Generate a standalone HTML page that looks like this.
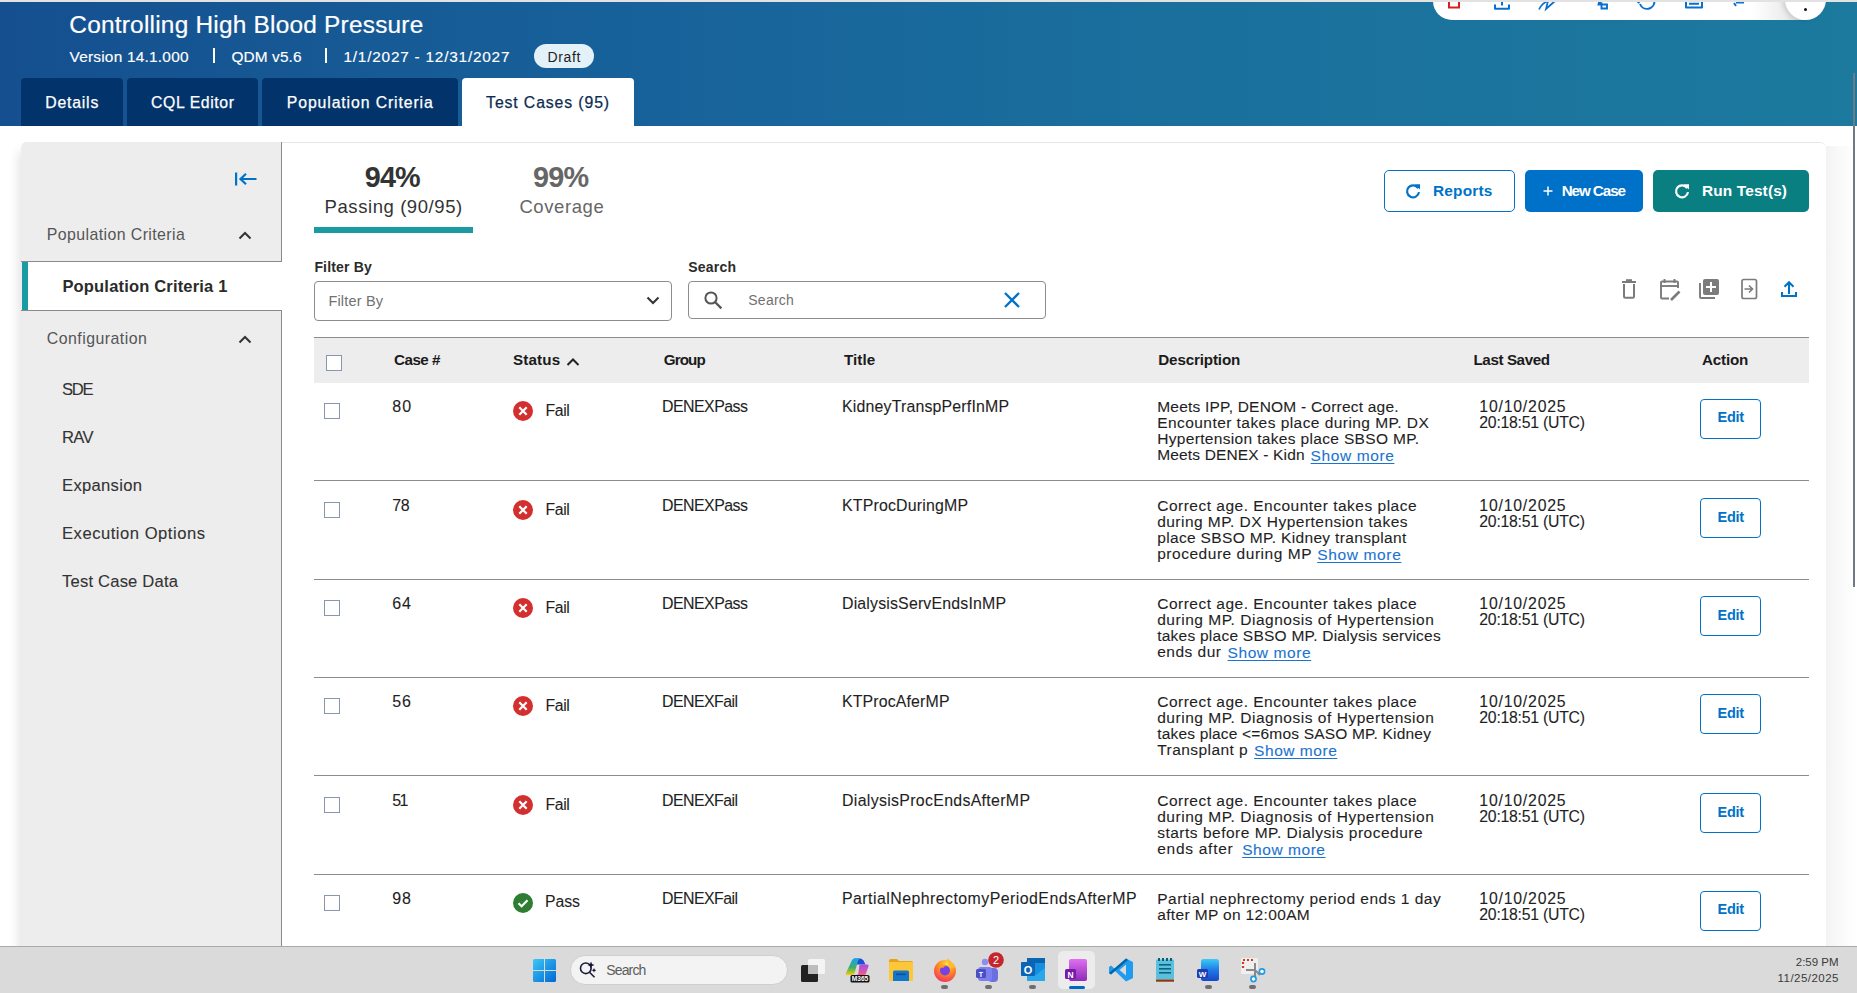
<!DOCTYPE html>
<html><head><meta charset="utf-8"><style>
html,body{margin:0;padding:0;}
body{width:1857px;height:993px;overflow:hidden;position:relative;background:#fff;font-family:"Liberation Sans", sans-serif;}
.t{position:absolute;white-space:nowrap;}
.r{position:absolute;box-sizing:border-box;}
.s{position:absolute;overflow:visible;}
</style></head><body>
<div class="r" style="left:0px;top:0px;width:1857px;height:2px;background:#e4e4e4;"></div>
<div class="r" style="left:0px;top:2px;width:1857px;height:124px;background:linear-gradient(90deg,#154f8f 0%,#17619a 33%,#1a6f9d 62%,#1c7a9e 100%);"></div>
<div class="t" id="t0" style="left:69.3px;top:9.91px;font-size:24.4px;line-height:29.28px;color:#fff;font-weight:400;-webkit-text-stroke:0.2px #fff;letter-spacing:0.231px;">Controlling High Blood Pressure</div>
<div class="t" id="t1" style="left:69.5px;top:47.72px;font-size:15.4px;line-height:18.48px;color:#fff;font-weight:400;-webkit-text-stroke:0.15px #fff;letter-spacing:0.231px;">Version 14.1.000</div>
<div class="r" style="left:213.2px;top:48px;width:1.7px;height:15px;background:#fff;"></div>
<div class="t" id="t2" style="left:231.5px;top:47.72px;font-size:15.4px;line-height:18.48px;color:#fff;font-weight:400;-webkit-text-stroke:0.15px #fff;letter-spacing:0.103px;">QDM v5.6</div>
<div class="r" style="left:325.2px;top:48px;width:1.7px;height:15px;background:#fff;"></div>
<div class="t" id="t3" style="left:343.5px;top:47.72px;font-size:15.4px;line-height:18.48px;color:#fff;font-weight:400;-webkit-text-stroke:0.15px #fff;letter-spacing:0.769px;">1/1/2027 - 12/31/2027</div>
<div class="r" style="left:534px;top:44px;width:60px;height:24px;background:#e3f1f8;border-radius:12px;"></div>
<div class="t" id="t4" style="left:547.4px;top:48.55px;font-size:14px;line-height:16.8px;color:#222;font-weight:400;letter-spacing:0.664px;">Draft</div>
<div class="r" style="left:21px;top:78px;width:102px;height:48px;background:#02346b;border-radius:4px 4px 0 0;"></div>
<div class="r" style="left:127px;top:78px;width:131px;height:48px;background:#02346b;border-radius:4px 4px 0 0;"></div>
<div class="r" style="left:262px;top:78px;width:196px;height:48px;background:#02346b;border-radius:4px 4px 0 0;"></div>
<div class="r" style="left:462px;top:78px;width:172px;height:48px;background:#fff;border-radius:4px 4px 0 0;"></div>
<div class="t" id="t5" style="left:45.3px;top:93.85px;font-size:15.8px;line-height:18.96px;color:#fff;font-weight:400;-webkit-text-stroke:0.25px #fff;letter-spacing:0.784px;">Details</div>
<div class="t" id="t6" style="left:151px;top:93.85px;font-size:15.8px;line-height:18.96px;color:#fff;font-weight:400;-webkit-text-stroke:0.25px #fff;letter-spacing:0.604px;">CQL Editor</div>
<div class="t" id="t7" style="left:286.8px;top:93.85px;font-size:15.8px;line-height:18.96px;color:#fff;font-weight:400;-webkit-text-stroke:0.25px #fff;letter-spacing:0.891px;">Population Criteria</div>
<div class="t" id="t8" style="left:486.1px;top:93.85px;font-size:15.8px;line-height:18.96px;color:#0d2b52;font-weight:400;-webkit-text-stroke:0.25px #0d2b52;letter-spacing:0.884px;">Test Cases (95)</div>
<div class="r" style="left:1853px;top:73px;width:2px;height:514px;background:#707a86;"></div>
<div class="r" style="left:21px;top:142px;width:1805px;height:820px;background:#fff;border-radius:6px 6px 0 0;box-shadow:-8px 4px 10px -6px rgba(0,0,0,0.12);border-top:1px solid #e6e6e6;"></div>
<div class="r" style="left:21px;top:142px;width:261px;height:820px;background:#ededed;border-radius:6px 0 0 0;border-right:1px solid #8a8a8a;"></div>
<svg class="s" style="left:233px;top:171px" width="26" height="16" viewBox="0 0 26 16"><rect x="2" y="1.5" width="2.2" height="13" fill="#0073c8"/><path d="M23.5 8 H7.5 M13 2.8 L7.5 8 L13 13.2" stroke="#0073c8" stroke-width="2.2" fill="none"/></svg>
<div class="t" id="t9" style="left:46.8px;top:225.35px;font-size:15.9px;line-height:19.08px;color:#555;font-weight:400;letter-spacing:0.404px;">Population Criteria</div>
<svg class="s" style="left:237px;top:229px" width="16" height="12" viewBox="0 0 16 12"><path d="M2.5 9.5 L8 4 L13.5 9.5" stroke="#333" stroke-width="2" fill="none"/></svg>
<div class="r" style="left:21px;top:261px;width:261px;height:1px;background:#8a8a8a;"></div>
<div class="r" style="left:22px;top:262px;width:260px;height:48px;background:#fff;"></div>
<div class="r" style="left:22px;top:262px;width:6px;height:48px;background:#1a9ba1;"></div>
<div class="r" style="left:21px;top:310px;width:261px;height:1px;background:#8a8a8a;"></div>
<div class="t" id="t10" style="left:62.4px;top:276.68px;font-size:16.5px;line-height:19.8px;color:#2b2b2b;font-weight:700;letter-spacing:0.182px;">Population Criteria 1</div>
<div class="t" id="t11" style="left:46.8px;top:328.95px;font-size:15.9px;line-height:19.08px;color:#555;font-weight:400;letter-spacing:0.456px;">Configuration</div>
<svg class="s" style="left:237px;top:333px" width="16" height="12" viewBox="0 0 16 12"><path d="M2.5 9.5 L8 4 L13.5 9.5" stroke="#333" stroke-width="2" fill="none"/></svg>
<div class="t" id="t12" style="left:62px;top:379.59px;font-size:16.6px;line-height:19.92px;color:#333;font-weight:400;-webkit-text-stroke:0.1px #333;letter-spacing:-1.312px;">SDE</div>
<div class="t" id="t13" style="left:62px;top:427.59px;font-size:16.6px;line-height:19.92px;color:#333;font-weight:400;-webkit-text-stroke:0.1px #333;letter-spacing:-0.695px;">RAV</div>
<div class="t" id="t14" style="left:62px;top:475.59px;font-size:16.6px;line-height:19.92px;color:#333;font-weight:400;-webkit-text-stroke:0.1px #333;letter-spacing:0.312px;">Expansion</div>
<div class="t" id="t15" style="left:62px;top:523.59px;font-size:16.6px;line-height:19.92px;color:#333;font-weight:400;-webkit-text-stroke:0.1px #333;letter-spacing:0.521px;">Execution Options</div>
<div class="t" id="t16" style="left:62px;top:571.59px;font-size:16.6px;line-height:19.92px;color:#333;font-weight:400;-webkit-text-stroke:0.1px #333;letter-spacing:0.196px;">Test Case Data</div>
<div class="t" id="t17" style="left:364.7px;top:159.74px;font-size:28.8px;line-height:34.56px;color:#333;font-weight:700;letter-spacing:-0.820px;">94%</div>
<div class="t" id="t18" style="left:324.6px;top:196.29px;font-size:18.5px;line-height:22.2px;color:#333;font-weight:400;letter-spacing:0.573px;">Passing (90/95)</div>
<div class="r" style="left:314px;top:227px;width:159px;height:6px;background:#1a9ba1;"></div>
<div class="t" id="t19" style="left:533px;top:159.74px;font-size:28.8px;line-height:34.56px;color:#666;font-weight:700;letter-spacing:-0.820px;">99%</div>
<div class="t" id="t20" style="left:519.4px;top:196.29px;font-size:18.5px;line-height:22.2px;color:#666;font-weight:400;letter-spacing:0.597px;">Coverage</div>
<div class="r" style="left:1384px;top:170px;width:131px;height:42px;border:1.5px solid #0073c8;border-radius:5px;background:#fff;"></div>
<svg class="s" style="left:1405px;top:183px" width="16" height="16" viewBox="0 0 16 16"><path d="M13.2 5.2 A6 6 0 1 0 14 9.2" stroke="#0073c8" stroke-width="2.2" fill="none"/><path d="M9.6 1.2 L15 1.2 L15 6.6 Z" fill="#0073c8"/></svg>
<div class="t" id="t21" style="left:1433px;top:182.02px;font-size:15.4px;line-height:18.48px;color:#0073c8;font-weight:700;letter-spacing:0.191px;">Reports</div>
<div class="r" style="left:1525px;top:170px;width:118px;height:42px;background:#0071c9;border-radius:5px;"></div>
<svg class="s" style="left:1543px;top:186px" width="10" height="10" viewBox="0 0 10 10"><path d="M5 0.5 V9.5 M0.5 5 H9.5" stroke="#fff" stroke-width="1.5"/></svg>
<div class="t" id="t22" style="left:1561.7px;top:181.81px;font-size:15.2px;line-height:18.24px;color:#fff;font-weight:700;letter-spacing:-1.067px;">New Case</div>
<div class="r" style="left:1653px;top:170px;width:156px;height:42px;background:#0a7f82;border-radius:5px;"></div>
<svg class="s" style="left:1674px;top:183px" width="16" height="16" viewBox="0 0 16 16"><path d="M13.2 5.2 A6 6 0 1 0 14 9.2" stroke="#fff" stroke-width="2.2" fill="none"/><path d="M9.6 1.2 L15 1.2 L15 6.6 Z" fill="#fff"/></svg>
<div class="t" id="t23" style="left:1702px;top:182.02px;font-size:15.4px;line-height:18.48px;color:#fff;font-weight:700;letter-spacing:0.148px;">Run Test(s)</div>
<div class="t" id="t24" style="left:314.4px;top:258.75px;font-size:14px;line-height:16.8px;color:#2b2b2b;font-weight:700;letter-spacing:0.173px;">Filter By</div>
<div class="r" style="left:314px;top:281px;width:358px;height:40px;border:1px solid #8c8c8c;border-radius:4px;background:#fff;"></div>
<div class="t" id="t25" style="left:328.4px;top:292.68px;font-size:14.5px;line-height:17.4px;color:#717171;font-weight:400;letter-spacing:0.179px;">Filter By</div>
<svg class="s" style="left:645px;top:294px" width="16" height="14" viewBox="0 0 16 14"><path d="M2.5 3.5 L8 9 L13.5 3.5" stroke="#333" stroke-width="2" fill="none"/></svg>
<div class="t" id="t26" style="left:688.2px;top:259.05px;font-size:14px;line-height:16.8px;color:#2b2b2b;font-weight:700;letter-spacing:0.219px;">Search</div>
<div class="r" style="left:688px;top:281px;width:358px;height:38px;border:1px solid #8c8c8c;border-radius:4px;background:#fff;"></div>
<svg class="s" style="left:703px;top:290px" width="20" height="20" viewBox="0 0 20 20"><circle cx="8" cy="8" r="5.6" stroke="#555" stroke-width="2" fill="none"/><path d="M12.2 12.2 L18.4 18.4" stroke="#555" stroke-width="2.3"/></svg>
<div class="t" id="t27" style="left:748.3px;top:291.75px;font-size:14px;line-height:16.8px;color:#717171;font-weight:400;letter-spacing:0.228px;">Search</div>
<svg class="s" style="left:1003px;top:291px" width="18" height="18" viewBox="0 0 18 18"><path d="M2 2 L16 16 M16 2 L2 16" stroke="#0073c8" stroke-width="2.3"/></svg>
<svg class="s" style="left:1620px;top:278px" width="18" height="22" viewBox="0 0 18 22"><path d="M2 4 H16" stroke="#7b7b7b" stroke-width="2"/><path d="M6 2.2 H12" stroke="#7b7b7b" stroke-width="2"/><path d="M4 6 V18.5 Q4 19.8 5.3 19.8 H12.7 Q14 19.8 14 18.5 V6" stroke="#7b7b7b" stroke-width="2" fill="none"/></svg>
<svg class="s" style="left:1658px;top:277px" width="24" height="24" viewBox="0 0 24 24"><path d="M11 21.5 H4 Q3 21.5 3 20.5 V5.5 Q3 4.5 4 4.5 H19 Q20 4.5 20 5.5 V11" stroke="#7b7b7b" stroke-width="1.9" fill="none"/><path d="M3 9 H20" stroke="#7b7b7b" stroke-width="1.9"/><path d="M6.5 2 V6 M16.5 2 V6" stroke="#7b7b7b" stroke-width="1.9"/><path d="M13 23 L21.5 14.5" stroke="#7b7b7b" stroke-width="2.6"/></svg>
<svg class="s" style="left:1697px;top:277px" width="24" height="24" viewBox="0 0 24 24"><rect x="6" y="2" width="16" height="16" rx="2" fill="#7b7b7b"/><path d="M14 5 V15 M9 10 H19" stroke="#fff" stroke-width="2"/><path d="M3 6 V20 Q3 21 4 21 H18" stroke="#7b7b7b" stroke-width="1.9" fill="none"/></svg>
<svg class="s" style="left:1739px;top:277px" width="20" height="24" viewBox="0 0 20 24"><rect x="3" y="2.5" width="14.5" height="19" rx="1.8" stroke="#7b7b7b" stroke-width="1.7" fill="none"/><path d="M5.5 12 H13.5 M10 8.5 L13.5 12 L10 15.5" stroke="#7b7b7b" stroke-width="1.6" fill="none"/></svg>
<svg class="s" style="left:1779px;top:279px" width="20" height="20" viewBox="0 0 20 20"><path d="M10 15 V4 M5.5 7.8 L10 3.3 L14.5 7.8" stroke="#0073c8" stroke-width="2.1" fill="none"/><path d="M3 13 V17 H17 V13" stroke="#0073c8" stroke-width="2.1" fill="none"/></svg>
<div class="r" style="left:314px;top:337px;width:1495px;height:1px;background:#8c8c8c;"></div>
<div class="r" style="left:314px;top:338px;width:1495px;height:45px;background:#ededed;"></div>
<div class="r" style="left:326px;top:355px;width:16px;height:16px;border:1.5px solid #8896b0;background:#fff;"></div>
<div class="t" id="t28" style="left:394px;top:350.81px;font-size:15.2px;line-height:18.24px;color:#1b1b1b;font-weight:700;letter-spacing:-0.497px;">Case #</div>
<div class="t" id="t29" style="left:512.9px;top:350.81px;font-size:15.2px;line-height:18.24px;color:#1b1b1b;font-weight:700;letter-spacing:0.196px;">Status</div>
<div class="t" id="t30" style="left:663.8px;top:350.81px;font-size:15.2px;line-height:18.24px;color:#1b1b1b;font-weight:700;letter-spacing:-0.891px;">Group</div>
<div class="t" id="t31" style="left:843.9px;top:350.81px;font-size:15.2px;line-height:18.24px;color:#1b1b1b;font-weight:700;letter-spacing:0.087px;">Title</div>
<div class="t" id="t32" style="left:1158.3px;top:350.81px;font-size:15.2px;line-height:18.24px;color:#1b1b1b;font-weight:700;letter-spacing:-0.155px;">Description</div>
<div class="t" id="t33" style="left:1473.5px;top:350.81px;font-size:15.2px;line-height:18.24px;color:#1b1b1b;font-weight:700;letter-spacing:-0.411px;">Last Saved</div>
<div class="t" id="t34" style="left:1702px;top:350.81px;font-size:15.2px;line-height:18.24px;color:#1b1b1b;font-weight:700;letter-spacing:-0.190px;">Action</div>
<svg class="s" style="left:565px;top:356px" width="16" height="12" viewBox="0 0 16 12"><path d="M2.5 9 L8 3.5 L13.5 9" stroke="#222" stroke-width="2" fill="none"/></svg>
<div class="r" style="left:314px;top:480px;width:1495px;height:1px;background:#8c8c8c;"></div>
<div class="r" style="left:314px;top:579px;width:1495px;height:1px;background:#8c8c8c;"></div>
<div class="r" style="left:314px;top:677px;width:1495px;height:1px;background:#8c8c8c;"></div>
<div class="r" style="left:314px;top:775px;width:1495px;height:1px;background:#8c8c8c;"></div>
<div class="r" style="left:314px;top:874px;width:1495px;height:1px;background:#8c8c8c;"></div>
<div class="r" style="left:324px;top:403px;width:16px;height:16px;border:1.5px solid #8896b0;background:#fff;"></div>
<div class="t" id="t35" style="left:392.2px;top:396.96px;font-size:16px;line-height:19.2px;color:#1f1f1f;font-weight:400;-webkit-text-stroke:0.1px #1f1f1f;letter-spacing:1.203px;">80</div>
<svg class="s" style="left:513px;top:401px" width="20" height="20" viewBox="0 0 20 20"><circle cx="10" cy="10" r="10" fill="#d32f2f"/><path d="M6.3 6.3 L13.7 13.7 M13.7 6.3 L6.3 13.7" stroke="#fff" stroke-width="2.2"/></svg>
<div class="t" id="t36" style="left:545.6px;top:401.65px;font-size:15.8px;line-height:18.96px;color:#1f1f1f;font-weight:400;-webkit-text-stroke:0.1px #1f1f1f;letter-spacing:-0.423px;">Fail</div>
<div class="t" id="t37" style="left:662px;top:397.05px;font-size:15.9px;line-height:19.08px;color:#1f1f1f;font-weight:400;-webkit-text-stroke:0.1px #1f1f1f;letter-spacing:-0.510px;">DENEXPass</div>
<div class="t" id="t38" style="left:842px;top:397.05px;font-size:15.9px;line-height:19.08px;color:#1f1f1f;font-weight:400;-webkit-text-stroke:0.1px #1f1f1f;letter-spacing:0.174px;">KidneyTranspPerfInMP</div>
<div class="t" id="t39" style="left:1157.2px;top:397.83px;font-size:15.5px;line-height:18.6px;color:#1f1f1f;font-weight:400;-webkit-text-stroke:0.1px #1f1f1f;letter-spacing:0.217px;">Meets IPP, DENOM - Correct age.</div>
<div class="t" id="t40" style="left:1157.2px;top:413.83px;font-size:15.5px;line-height:18.6px;color:#1f1f1f;font-weight:400;-webkit-text-stroke:0.1px #1f1f1f;letter-spacing:0.445px;">Encounter takes place during MP. DX</div>
<div class="t" id="t41" style="left:1157.2px;top:429.83px;font-size:15.5px;line-height:18.6px;color:#1f1f1f;font-weight:400;-webkit-text-stroke:0.1px #1f1f1f;letter-spacing:0.334px;">Hypertension takes place SBSO MP.</div>
<div class="t" id="t42" style="left:1157.2px;top:445.83px;font-size:15.5px;line-height:18.6px;color:#1f1f1f;font-weight:400;-webkit-text-stroke:0.1px #1f1f1f;letter-spacing:0.158px;">Meets DENEX - Kidn</div>
<div class="t" id="t43" style="left:1310.6px;top:447.03px;font-size:15.5px;line-height:18.6px;color:#1a73d0;font-weight:400;-webkit-text-stroke:0.1px #1a73d0;letter-spacing:0.599px;text-decoration:underline;text-underline-offset:1.5px;">Show more</div>
<div class="t" id="t44" style="left:1479.3px;top:398.15px;font-size:15.8px;line-height:18.96px;color:#1f1f1f;font-weight:400;-webkit-text-stroke:0.1px #1f1f1f;letter-spacing:0.804px;">10/10/2025</div>
<div class="t" id="t45" style="left:1479.3px;top:414.15px;font-size:15.8px;line-height:18.96px;color:#1f1f1f;font-weight:400;-webkit-text-stroke:0.1px #1f1f1f;letter-spacing:-0.244px;">20:18:51 (UTC)</div>
<div class="r" style="left:1700px;top:399px;width:61px;height:40px;border:1.2px solid #0073c8;border-radius:4px;background:#fff;"></div>
<div class="t" id="t46" style="left:1717.6px;top:409.38px;font-size:14.5px;line-height:17.4px;color:#0073c8;font-weight:700;letter-spacing:-0.330px;">Edit</div>
<div class="r" style="left:324px;top:502px;width:16px;height:16px;border:1.5px solid #8896b0;background:#fff;"></div>
<div class="t" id="t47" style="left:392.2px;top:496.16px;font-size:16px;line-height:19.2px;color:#1f1f1f;font-weight:400;-webkit-text-stroke:0.1px #1f1f1f;letter-spacing:-0.397px;">78</div>
<svg class="s" style="left:513px;top:500px" width="20" height="20" viewBox="0 0 20 20"><circle cx="10" cy="10" r="10" fill="#d32f2f"/><path d="M6.3 6.3 L13.7 13.7 M13.7 6.3 L6.3 13.7" stroke="#fff" stroke-width="2.2"/></svg>
<div class="t" id="t48" style="left:545.6px;top:500.85px;font-size:15.8px;line-height:18.96px;color:#1f1f1f;font-weight:400;-webkit-text-stroke:0.1px #1f1f1f;letter-spacing:-0.423px;">Fail</div>
<div class="t" id="t49" style="left:662px;top:496.25px;font-size:15.9px;line-height:19.08px;color:#1f1f1f;font-weight:400;-webkit-text-stroke:0.1px #1f1f1f;letter-spacing:-0.510px;">DENEXPass</div>
<div class="t" id="t50" style="left:842px;top:496.25px;font-size:15.9px;line-height:19.08px;color:#1f1f1f;font-weight:400;-webkit-text-stroke:0.1px #1f1f1f;letter-spacing:0.181px;">KTProcDuringMP</div>
<div class="t" id="t51" style="left:1157.2px;top:497.03px;font-size:15.5px;line-height:18.6px;color:#1f1f1f;font-weight:400;-webkit-text-stroke:0.1px #1f1f1f;letter-spacing:0.498px;">Correct age. Encounter takes place</div>
<div class="t" id="t52" style="left:1157.2px;top:513.03px;font-size:15.5px;line-height:18.6px;color:#1f1f1f;font-weight:400;-webkit-text-stroke:0.1px #1f1f1f;letter-spacing:0.468px;">during MP. DX Hypertension takes</div>
<div class="t" id="t53" style="left:1157.2px;top:529.03px;font-size:15.5px;line-height:18.6px;color:#1f1f1f;font-weight:400;-webkit-text-stroke:0.1px #1f1f1f;letter-spacing:0.346px;">place SBSO MP. Kidney transplant</div>
<div class="t" id="t54" style="left:1157.2px;top:545.03px;font-size:15.5px;line-height:18.6px;color:#1f1f1f;font-weight:400;-webkit-text-stroke:0.1px #1f1f1f;letter-spacing:0.531px;">procedure during MP</div>
<div class="t" id="t55" style="left:1317.2px;top:546.23px;font-size:15.5px;line-height:18.6px;color:#1a73d0;font-weight:400;-webkit-text-stroke:0.1px #1a73d0;letter-spacing:0.649px;text-decoration:underline;text-underline-offset:1.5px;">Show more</div>
<div class="t" id="t56" style="left:1479.3px;top:497.35px;font-size:15.8px;line-height:18.96px;color:#1f1f1f;font-weight:400;-webkit-text-stroke:0.1px #1f1f1f;letter-spacing:0.804px;">10/10/2025</div>
<div class="t" id="t57" style="left:1479.3px;top:513.35px;font-size:15.8px;line-height:18.96px;color:#1f1f1f;font-weight:400;-webkit-text-stroke:0.1px #1f1f1f;letter-spacing:-0.244px;">20:18:51 (UTC)</div>
<div class="r" style="left:1700px;top:498px;width:61px;height:40px;border:1.2px solid #0073c8;border-radius:4px;background:#fff;"></div>
<div class="t" id="t58" style="left:1717.6px;top:508.58px;font-size:14.5px;line-height:17.4px;color:#0073c8;font-weight:700;letter-spacing:-0.330px;">Edit</div>
<div class="r" style="left:324px;top:600px;width:16px;height:16px;border:1.5px solid #8896b0;background:#fff;"></div>
<div class="t" id="t59" style="left:392.2px;top:594.16px;font-size:16px;line-height:19.2px;color:#1f1f1f;font-weight:400;-webkit-text-stroke:0.1px #1f1f1f;letter-spacing:0.903px;">64</div>
<svg class="s" style="left:513px;top:598px" width="20" height="20" viewBox="0 0 20 20"><circle cx="10" cy="10" r="10" fill="#d32f2f"/><path d="M6.3 6.3 L13.7 13.7 M13.7 6.3 L6.3 13.7" stroke="#fff" stroke-width="2.2"/></svg>
<div class="t" id="t60" style="left:545.6px;top:598.85px;font-size:15.8px;line-height:18.96px;color:#1f1f1f;font-weight:400;-webkit-text-stroke:0.1px #1f1f1f;letter-spacing:-0.423px;">Fail</div>
<div class="t" id="t61" style="left:662px;top:594.25px;font-size:15.9px;line-height:19.08px;color:#1f1f1f;font-weight:400;-webkit-text-stroke:0.1px #1f1f1f;letter-spacing:-0.510px;">DENEXPass</div>
<div class="t" id="t62" style="left:842px;top:594.25px;font-size:15.9px;line-height:19.08px;color:#1f1f1f;font-weight:400;-webkit-text-stroke:0.1px #1f1f1f;letter-spacing:0.172px;">DialysisServEndsInMP</div>
<div class="t" id="t63" style="left:1157.2px;top:595.03px;font-size:15.5px;line-height:18.6px;color:#1f1f1f;font-weight:400;-webkit-text-stroke:0.1px #1f1f1f;letter-spacing:0.498px;">Correct age. Encounter takes place</div>
<div class="t" id="t64" style="left:1157.2px;top:611.03px;font-size:15.5px;line-height:18.6px;color:#1f1f1f;font-weight:400;-webkit-text-stroke:0.1px #1f1f1f;letter-spacing:0.526px;">during MP. Diagnosis of Hypertension</div>
<div class="t" id="t65" style="left:1157.2px;top:627.03px;font-size:15.5px;line-height:18.6px;color:#1f1f1f;font-weight:400;-webkit-text-stroke:0.1px #1f1f1f;letter-spacing:0.243px;">takes place SBSO MP. Dialysis services</div>
<div class="t" id="t66" style="left:1157.2px;top:643.03px;font-size:15.5px;line-height:18.6px;color:#1f1f1f;font-weight:400;-webkit-text-stroke:0.1px #1f1f1f;letter-spacing:0.496px;">ends dur</div>
<div class="t" id="t67" style="left:1227.5px;top:644.23px;font-size:15.5px;line-height:18.6px;color:#1a73d0;font-weight:400;-webkit-text-stroke:0.1px #1a73d0;letter-spacing:0.587px;text-decoration:underline;text-underline-offset:1.5px;">Show more</div>
<div class="t" id="t68" style="left:1479.3px;top:595.35px;font-size:15.8px;line-height:18.96px;color:#1f1f1f;font-weight:400;-webkit-text-stroke:0.1px #1f1f1f;letter-spacing:0.804px;">10/10/2025</div>
<div class="t" id="t69" style="left:1479.3px;top:611.35px;font-size:15.8px;line-height:18.96px;color:#1f1f1f;font-weight:400;-webkit-text-stroke:0.1px #1f1f1f;letter-spacing:-0.244px;">20:18:51 (UTC)</div>
<div class="r" style="left:1700px;top:596px;width:61px;height:40px;border:1.2px solid #0073c8;border-radius:4px;background:#fff;"></div>
<div class="t" id="t70" style="left:1717.6px;top:606.58px;font-size:14.5px;line-height:17.4px;color:#0073c8;font-weight:700;letter-spacing:-0.330px;">Edit</div>
<div class="r" style="left:324px;top:698px;width:16px;height:16px;border:1.5px solid #8896b0;background:#fff;"></div>
<div class="t" id="t71" style="left:392.2px;top:692.16px;font-size:16px;line-height:19.2px;color:#1f1f1f;font-weight:400;-webkit-text-stroke:0.1px #1f1f1f;letter-spacing:0.903px;">56</div>
<svg class="s" style="left:513px;top:696px" width="20" height="20" viewBox="0 0 20 20"><circle cx="10" cy="10" r="10" fill="#d32f2f"/><path d="M6.3 6.3 L13.7 13.7 M13.7 6.3 L6.3 13.7" stroke="#fff" stroke-width="2.2"/></svg>
<div class="t" id="t72" style="left:545.6px;top:696.85px;font-size:15.8px;line-height:18.96px;color:#1f1f1f;font-weight:400;-webkit-text-stroke:0.1px #1f1f1f;letter-spacing:-0.423px;">Fail</div>
<div class="t" id="t73" style="left:662px;top:692.25px;font-size:15.9px;line-height:19.08px;color:#1f1f1f;font-weight:400;-webkit-text-stroke:0.1px #1f1f1f;letter-spacing:-0.545px;">DENEXFail</div>
<div class="t" id="t74" style="left:842px;top:692.25px;font-size:15.9px;line-height:19.08px;color:#1f1f1f;font-weight:400;-webkit-text-stroke:0.1px #1f1f1f;letter-spacing:0.139px;">KTProcAferMP</div>
<div class="t" id="t75" style="left:1157.2px;top:693.03px;font-size:15.5px;line-height:18.6px;color:#1f1f1f;font-weight:400;-webkit-text-stroke:0.1px #1f1f1f;letter-spacing:0.498px;">Correct age. Encounter takes place</div>
<div class="t" id="t76" style="left:1157.2px;top:709.03px;font-size:15.5px;line-height:18.6px;color:#1f1f1f;font-weight:400;-webkit-text-stroke:0.1px #1f1f1f;letter-spacing:0.526px;">during MP. Diagnosis of Hypertension</div>
<div class="t" id="t77" style="left:1157.2px;top:725.03px;font-size:15.5px;line-height:18.6px;color:#1f1f1f;font-weight:400;-webkit-text-stroke:0.1px #1f1f1f;letter-spacing:0.183px;">takes place &lt;=6mos SASO MP. Kidney</div>
<div class="t" id="t78" style="left:1157.2px;top:741.03px;font-size:15.5px;line-height:18.6px;color:#1f1f1f;font-weight:400;-webkit-text-stroke:0.1px #1f1f1f;letter-spacing:0.446px;">Transplant p</div>
<div class="t" id="t79" style="left:1254.1px;top:742.23px;font-size:15.5px;line-height:18.6px;color:#1a73d0;font-weight:400;-webkit-text-stroke:0.1px #1a73d0;letter-spacing:0.537px;text-decoration:underline;text-underline-offset:1.5px;">Show more</div>
<div class="t" id="t80" style="left:1479.3px;top:693.35px;font-size:15.8px;line-height:18.96px;color:#1f1f1f;font-weight:400;-webkit-text-stroke:0.1px #1f1f1f;letter-spacing:0.804px;">10/10/2025</div>
<div class="t" id="t81" style="left:1479.3px;top:709.35px;font-size:15.8px;line-height:18.96px;color:#1f1f1f;font-weight:400;-webkit-text-stroke:0.1px #1f1f1f;letter-spacing:-0.244px;">20:18:51 (UTC)</div>
<div class="r" style="left:1700px;top:694px;width:61px;height:40px;border:1.2px solid #0073c8;border-radius:4px;background:#fff;"></div>
<div class="t" id="t82" style="left:1717.6px;top:704.58px;font-size:14.5px;line-height:17.4px;color:#0073c8;font-weight:700;letter-spacing:-0.330px;">Edit</div>
<div class="r" style="left:324px;top:797px;width:16px;height:16px;border:1.5px solid #8896b0;background:#fff;"></div>
<div class="t" id="t83" style="left:392.2px;top:791.16px;font-size:16px;line-height:19.2px;color:#1f1f1f;font-weight:400;-webkit-text-stroke:0.1px #1f1f1f;letter-spacing:-1.597px;">51</div>
<svg class="s" style="left:513px;top:795px" width="20" height="20" viewBox="0 0 20 20"><circle cx="10" cy="10" r="10" fill="#d32f2f"/><path d="M6.3 6.3 L13.7 13.7 M13.7 6.3 L6.3 13.7" stroke="#fff" stroke-width="2.2"/></svg>
<div class="t" id="t84" style="left:545.6px;top:795.85px;font-size:15.8px;line-height:18.96px;color:#1f1f1f;font-weight:400;-webkit-text-stroke:0.1px #1f1f1f;letter-spacing:-0.423px;">Fail</div>
<div class="t" id="t85" style="left:662px;top:791.25px;font-size:15.9px;line-height:19.08px;color:#1f1f1f;font-weight:400;-webkit-text-stroke:0.1px #1f1f1f;letter-spacing:-0.545px;">DENEXFail</div>
<div class="t" id="t86" style="left:842px;top:791.25px;font-size:15.9px;line-height:19.08px;color:#1f1f1f;font-weight:400;-webkit-text-stroke:0.1px #1f1f1f;letter-spacing:0.317px;">DialysisProcEndsAfterMP</div>
<div class="t" id="t87" style="left:1157.2px;top:792.03px;font-size:15.5px;line-height:18.6px;color:#1f1f1f;font-weight:400;-webkit-text-stroke:0.1px #1f1f1f;letter-spacing:0.498px;">Correct age. Encounter takes place</div>
<div class="t" id="t88" style="left:1157.2px;top:808.03px;font-size:15.5px;line-height:18.6px;color:#1f1f1f;font-weight:400;-webkit-text-stroke:0.1px #1f1f1f;letter-spacing:0.526px;">during MP. Diagnosis of Hypertension</div>
<div class="t" id="t89" style="left:1157.2px;top:824.03px;font-size:15.5px;line-height:18.6px;color:#1f1f1f;font-weight:400;-webkit-text-stroke:0.1px #1f1f1f;letter-spacing:0.502px;">starts before MP. Dialysis procedure</div>
<div class="t" id="t90" style="left:1157.2px;top:840.03px;font-size:15.5px;line-height:18.6px;color:#1f1f1f;font-weight:400;-webkit-text-stroke:0.1px #1f1f1f;letter-spacing:0.729px;">ends after</div>
<div class="t" id="t91" style="left:1242.2px;top:841.23px;font-size:15.5px;line-height:18.6px;color:#1a73d0;font-weight:400;-webkit-text-stroke:0.1px #1a73d0;letter-spacing:0.549px;text-decoration:underline;text-underline-offset:1.5px;">Show more</div>
<div class="t" id="t92" style="left:1479.3px;top:792.35px;font-size:15.8px;line-height:18.96px;color:#1f1f1f;font-weight:400;-webkit-text-stroke:0.1px #1f1f1f;letter-spacing:0.804px;">10/10/2025</div>
<div class="t" id="t93" style="left:1479.3px;top:808.35px;font-size:15.8px;line-height:18.96px;color:#1f1f1f;font-weight:400;-webkit-text-stroke:0.1px #1f1f1f;letter-spacing:-0.244px;">20:18:51 (UTC)</div>
<div class="r" style="left:1700px;top:793px;width:61px;height:40px;border:1.2px solid #0073c8;border-radius:4px;background:#fff;"></div>
<div class="t" id="t94" style="left:1717.6px;top:803.58px;font-size:14.5px;line-height:17.4px;color:#0073c8;font-weight:700;letter-spacing:-0.330px;">Edit</div>
<div class="r" style="left:324px;top:895px;width:16px;height:16px;border:1.5px solid #8896b0;background:#fff;"></div>
<div class="t" id="t95" style="left:392.2px;top:888.76px;font-size:16px;line-height:19.2px;color:#1f1f1f;font-weight:400;-webkit-text-stroke:0.1px #1f1f1f;letter-spacing:0.903px;">98</div>
<svg class="s" style="left:513px;top:893px" width="20" height="20" viewBox="0 0 20 20"><circle cx="10" cy="10" r="10" fill="#2e7d32"/><path d="M5.5 10.2 L8.6 13.2 L14.5 7.2" stroke="#fff" stroke-width="2.2" fill="none"/></svg>
<div class="t" id="t96" style="left:545px;top:893.45px;font-size:15.8px;line-height:18.96px;color:#1f1f1f;font-weight:400;-webkit-text-stroke:0.1px #1f1f1f;letter-spacing:-0.042px;">Pass</div>
<div class="t" id="t97" style="left:662px;top:888.85px;font-size:15.9px;line-height:19.08px;color:#1f1f1f;font-weight:400;-webkit-text-stroke:0.1px #1f1f1f;letter-spacing:-0.545px;">DENEXFail</div>
<div class="t" id="t98" style="left:842px;top:888.85px;font-size:15.9px;line-height:19.08px;color:#1f1f1f;font-weight:400;-webkit-text-stroke:0.1px #1f1f1f;letter-spacing:0.453px;">PartialNephrectomyPeriodEndsAfterMP</div>
<div class="t" id="t99" style="left:1157.2px;top:889.63px;font-size:15.5px;line-height:18.6px;color:#1f1f1f;font-weight:400;-webkit-text-stroke:0.1px #1f1f1f;letter-spacing:0.503px;">Partial nephrectomy period ends 1 day</div>
<div class="t" id="t100" style="left:1157.2px;top:905.63px;font-size:15.5px;line-height:18.6px;color:#1f1f1f;font-weight:400;-webkit-text-stroke:0.1px #1f1f1f;letter-spacing:0.356px;">after MP on 12:00AM</div>
<div class="t" id="t101" style="left:1479.3px;top:889.95px;font-size:15.8px;line-height:18.96px;color:#1f1f1f;font-weight:400;-webkit-text-stroke:0.1px #1f1f1f;letter-spacing:0.804px;">10/10/2025</div>
<div class="t" id="t102" style="left:1479.3px;top:905.95px;font-size:15.8px;line-height:18.96px;color:#1f1f1f;font-weight:400;-webkit-text-stroke:0.1px #1f1f1f;letter-spacing:-0.244px;">20:18:51 (UTC)</div>
<div class="r" style="left:1700px;top:891px;width:61px;height:40px;border:1.2px solid #0073c8;border-radius:4px;background:#fff;"></div>
<div class="t" id="t103" style="left:1717.6px;top:901.18px;font-size:14.5px;line-height:17.4px;color:#0073c8;font-weight:700;letter-spacing:-0.330px;">Edit</div>
<div class="r" style="left:1826px;top:146px;width:31px;height:801px;background:linear-gradient(90deg,#f3f3f3 0%,#f9f9f9 40%,#fff 100%);"></div>
<div class="r" style="left:1853px;top:73px;width:2px;height:514px;background:#707a86;"></div>
<div class="r" style="left:0px;top:946px;width:1857px;height:47px;background:#dadada;border-top:1px solid #a9a9a9;"></div>
<svg class="s" style="left:533px;top:959px" width="23" height="23" viewBox="0 0 23 23">
<defs><linearGradient id="wg" x1="0" y1="0" x2="1" y2="1"><stop offset="0" stop-color="#3cc8f8"/><stop offset="1" stop-color="#0067d4"/></linearGradient></defs>
<path d="M0 1.5 Q0 0 1.5 0 H11 V11 H0Z M12 0 H21.5 Q23 0 23 1.5 V11 H12Z M0 12 H11 V23 H1.5 Q0 23 0 21.5Z M12 12 H23 V21.5 Q23 23 21.5 23 H12Z" fill="url(#wg)"/></svg>
<div class="r" style="left:570px;top:955px;width:218px;height:30px;background:#f3f3f3;border:1px solid #cfcfcf;border-radius:15px;"></div>
<svg class="s" style="left:579px;top:961px" width="19" height="18" viewBox="0 0 19 18">
<circle cx="6.8" cy="7.3" r="5.3" stroke="#1b1b3a" stroke-width="1.6" fill="none"/><path d="M10.5 11.2 L15.5 16.3" stroke="#1b1b3a" stroke-width="1.6"/>
<path d="M12 0.5 L13 3 L15.5 4 L13 5 L12 7.5 L11 5 L8.5 4 L11 3Z" fill="#1a1030"/><path d="M15 7 L15.7 8.6 L17.3 9.3 L15.7 10 L15 11.6 L14.3 10 L12.7 9.3 L14.3 8.6Z" fill="#1a1030"/></svg>
<div class="t" id="t104" style="left:606.3px;top:962.15px;font-size:14px;line-height:16.8px;color:#5c5c5c;font-weight:400;letter-spacing:-0.872px;">Search</div>
<svg class="s" style="left:801px;top:959px" width="24" height="23" viewBox="0 0 24 23">
<rect x="7" y="0" width="17" height="15" rx="1.5" fill="#f4f4f4"/><rect x="0" y="6" width="17" height="17" rx="1.5" fill="#222"/><rect x="7" y="6" width="10" height="9" fill="#bdbdbd"/></svg>
<svg class="s" style="left:845px;top:958px" width="25" height="25" viewBox="0 0 25 25">
<defs><linearGradient id="cl" x1="0" y1="0" x2="0" y2="1"><stop offset="0" stop-color="#17a3f0"/><stop offset="0.55" stop-color="#3fb068"/><stop offset="1" stop-color="#f5cc00"/></linearGradient>
<linearGradient id="cr" x1="0" y1="0" x2="0" y2="1"><stop offset="0" stop-color="#a050e8"/><stop offset="1" stop-color="#f55a8a"/></linearGradient></defs>
<path d="M9 0.6 H15 Q17 0.6 18.5 2.5 L20.5 6.5 H12 Z" fill="#1d4fd6"/>
<path d="M1 15 Q0.3 17 2 17 H7.5 Q9 17 9.6 15 L13 3 Q13.6 0.8 15.5 0.6 H9.5 Q7.5 0.6 6.8 2.6 Z" fill="url(#cl)"/>
<path d="M14.5 6.5 H22.3 Q24 6.5 23.5 8.3 L21 15.5 Q20.5 17 19 17 H11.2 Q12.8 17 13.3 15.4 Z" fill="url(#cr)"/>
<rect x="5.5" y="17" width="19" height="7.5" rx="1.6" fill="#111"/><text x="15" y="23.3" font-family="Liberation Sans" font-size="6.6" font-weight="700" fill="#fff" text-anchor="middle">M365</text></svg>
<svg class="s" style="left:889px;top:959px" width="24" height="22" viewBox="0 0 24 22">
<path d="M0 1.5 Q0 0 1.5 0 H8 L10 2 H22.5 Q24 2 24 3.5 V5 H0Z" fill="#e8a416"/><rect x="0" y="3" width="24" height="19" rx="1" fill="#fcc83a"/><path d="M4 13 Q4 11.5 5.5 11.5 H18.5 Q20 11.5 20 13 V22 H4Z" fill="#1475c9"/><rect x="7" y="14.5" width="10" height="1.6" fill="#0c4f94"/></svg>
<svg class="s" style="left:933px;top:958px" width="24" height="24" viewBox="0 0 24 24">
<defs><radialGradient id="ff" cx="0.6" cy="0.2" r="0.9"><stop offset="0" stop-color="#ffe14a"/><stop offset="0.45" stop-color="#ff8a1f"/><stop offset="1" stop-color="#f0256b"/></radialGradient></defs>
<circle cx="12" cy="13" r="11" fill="url(#ff)"/><path d="M14 0 Q20 4 22 10 L16 9Z" fill="#ffbd2e"/><circle cx="12" cy="12.5" r="5" fill="#7542e5"/><path d="M6 9 Q9 6 14 8 Q11 8 10 10Z" fill="#ff9b22"/></svg>
<div class="r" style="left:941px;top:985px;width:7px;height:4px;background:#6f6f6f;border-radius:2px;"></div>
<svg class="s" style="left:976px;top:952px" width="28" height="30" viewBox="0 0 28 30">
<circle cx="9" cy="10" r="3.2" fill="#8c8ff0"/><rect x="12" y="16" width="10" height="14" rx="4" fill="#6a6fe0"/><rect x="2" y="15" width="14" height="14" rx="3" fill="#7b7ff0"/>
<rect x="0" y="17" width="10" height="9" rx="1.5" fill="#4a4fc4"/><text x="5" y="24.5" font-family="Liberation Sans" font-size="7" font-weight="700" fill="#fff" text-anchor="middle">T</text>
<circle cx="20" cy="8" r="7.8" fill="#c4262e"/><text x="20" y="12.2" font-family="Liberation Sans" font-size="11" fill="#fff" text-anchor="middle">2</text></svg>
<div class="r" style="left:985px;top:985px;width:7px;height:4px;background:#6f6f6f;border-radius:2px;"></div>
<svg class="s" style="left:1021px;top:958px" width="24" height="23" viewBox="0 0 24 23">
<rect x="6" y="0" width="18" height="6" fill="#0a63b3"/><rect x="6" y="5" width="18" height="18" fill="#1490df"/><path d="M6 10 L15 17 L24 10 V23 H6Z" fill="#28a8ea"/>
<rect x="0" y="4" width="14" height="14" rx="1" fill="#0b64b5"/><text x="7" y="15.5" font-family="Liberation Sans" font-size="11" font-weight="700" fill="#fff" text-anchor="middle">O</text></svg>
<div class="r" style="left:1029px;top:985px;width:7px;height:4px;background:#6f6f6f;border-radius:2px;"></div>
<div class="r" style="left:1058px;top:951px;width:37px;height:38px;background:#ececec;border-radius:5px;"></div>
<svg class="s" style="left:1065px;top:959px" width="22" height="22" viewBox="0 0 22 22">
<defs><linearGradient id="on" x1="0" y1="0" x2="0" y2="1"><stop offset="0" stop-color="#e070f0"/><stop offset="1" stop-color="#8c2bb8"/></linearGradient></defs>
<rect x="4" y="0" width="18" height="22" rx="2" fill="url(#on)"/><rect x="0" y="10" width="11" height="10" rx="1.5" fill="#7719aa"/><text x="5.5" y="18.5" font-family="Liberation Sans" font-size="8.5" font-weight="700" fill="#fff" text-anchor="middle">N</text></svg>
<div class="r" style="left:1069px;top:986px;width:16px;height:3px;background:#0067c0;border-radius:2px;"></div>
<svg class="s" style="left:1109px;top:958px" width="24" height="24" viewBox="0 0 24 24">
<path d="M17 0.5 L24 4 V20 L17 23.5 L6 13 L2 16.5 L0 15 V9 L2 7.5 L6 11 Z M17 6.5 L10.5 12 L17 17.5Z" fill="#1f9cf0"/><path d="M0 15 L17 0.5 L19 2 L2 16.5Z" fill="#0065a9"/></svg>
<svg class="s" style="left:1156px;top:958px" width="18" height="24" viewBox="0 0 18 24">
<rect x="0" y="1.5" width="18" height="20" rx="1" fill="#5bc0de"/><rect x="2" y="0" width="2" height="3" fill="#0b5e7a"/><rect x="6" y="0" width="2" height="3" fill="#0b5e7a"/><rect x="10" y="0" width="2" height="3" fill="#0b5e7a"/><rect x="14" y="0" width="2" height="3" fill="#0b5e7a"/>
<rect x="3" y="6" width="12" height="1.6" fill="#0b6582"/><rect x="3" y="10" width="12" height="1.6" fill="#0b6582"/><rect x="3" y="14" width="12" height="1.6" fill="#0b6582"/><rect x="0" y="21.5" width="18" height="2.2" fill="#8a3a10"/></svg>
<svg class="s" style="left:1197px;top:959px" width="22" height="22" viewBox="0 0 22 22">
<defs><linearGradient id="wd" x1="0" y1="0" x2="0" y2="1"><stop offset="0" stop-color="#3ccbf4"/><stop offset="0.5" stop-color="#1e7ae8"/><stop offset="1" stop-color="#1a45c8"/></linearGradient></defs>
<rect x="4" y="0" width="18" height="22" rx="2.5" fill="url(#wd)"/><rect x="0" y="10" width="11" height="9" rx="1.5" fill="#1b3fb0"/><text x="5.5" y="17.5" font-family="Liberation Sans" font-size="8" font-weight="700" fill="#fff" text-anchor="middle">W</text></svg>
<div class="r" style="left:1205px;top:985px;width:7px;height:4px;background:#6f6f6f;border-radius:2px;"></div>
<svg class="s" style="left:1241px;top:958px" width="25" height="24" viewBox="0 0 25 24">
<rect x="0" y="0" width="17" height="16" rx="1" fill="#efefef"/>
<path d="M2 2 H4 M6 2 H8 M10 2 H12 M2 4 V6 M2 8 V10" stroke="#d53a1e" stroke-width="2.2"/>
<path d="M5 12 H14 L19 17 M14 5 V14 L14 21" stroke="#8a8a8a" stroke-width="2" fill="none"/>
<circle cx="21" cy="13.5" r="2.6" stroke="#1c9be6" stroke-width="1.6" fill="#fff"/><circle cx="12.5" cy="21" r="2.6" stroke="#1c9be6" stroke-width="1.6" fill="#fff"/></svg>
<div class="r" style="left:1249px;top:985px;width:7px;height:4px;background:#6f6f6f;border-radius:2px;"></div>
<div class="t" id="t105" style="left:1795.8px;top:956.12px;font-size:11.5px;line-height:13.8px;color:#3a3a3a;font-weight:400;letter-spacing:-0.021px;">2:59 PM</div>
<div class="t" id="t106" style="left:1777.5px;top:971.92px;font-size:11.5px;line-height:13.8px;color:#3a3a3a;font-weight:400;letter-spacing:0.477px;">11/25/2025</div>
<div class="r" style="left:1433px;top:-30px;width:373px;height:49.5px;background:#fff;border-radius:0 0 0 19px;"></div>
<div class="r" style="left:1752px;top:2px;width:54px;height:17.5px;background:linear-gradient(90deg,rgba(255,255,255,0) 0%,rgba(225,225,225,0.6) 60%,rgba(205,205,205,0.95) 100%);"></div>
<div class="r" style="left:1785px;top:-21px;width:41px;height:41px;border-radius:50%;background:#fff;box-shadow:-3px 0 5px rgba(0,0,0,0.12);"></div>
<div class="r" style="left:1804.3px;top:8px;width:3.2px;height:3.2px;background:#111;border-radius:50%;"></div>
<svg class="s" style="left:1440px;top:0px" width="320" height="14" viewBox="0 0 320 14">
<path d="M9 0 V7.5 H19 V0" stroke="#d42020" stroke-width="2" fill="none"/>
<path d="M55 4.5 V8.8 H69 V4.5" stroke="#0a6fd0" stroke-width="2" fill="none" stroke-linejoin="round"/><path d="M62 1 V5.5" stroke="#0a6fd0" stroke-width="2"/>
<path d="M99 9.5 Q102 3 108 1 L106 9 L115 1" stroke="#0a6fd0" stroke-width="1.7" fill="none"/>
<path d="M158 2.5 H161.5 M161.5 2.5 V4.5 M157.5 4.5 H167 V8.5 H161.5 V4.5" stroke="#0a6fd0" stroke-width="1.9" fill="none"/>
<path d="M197.5 1.5 L199.5 3 M214.5 1 A7.5 7.5 0 0 1 200 4" stroke="#0a6fd0" stroke-width="2" fill="none"/>
<path d="M246 0 V7.5 H262 V0 M249 3.8 H259" stroke="#0a6fd0" stroke-width="2" fill="none" stroke-linejoin="round"/>
<path d="M294 3 L296 6 M296 2.5 H304" stroke="#0a6fd0" stroke-width="2" fill="none"/>
</svg>
<div class="r" style="left:0px;top:0px;width:1857px;height:2px;background:#e2e2e2;"></div>
</body></html>
